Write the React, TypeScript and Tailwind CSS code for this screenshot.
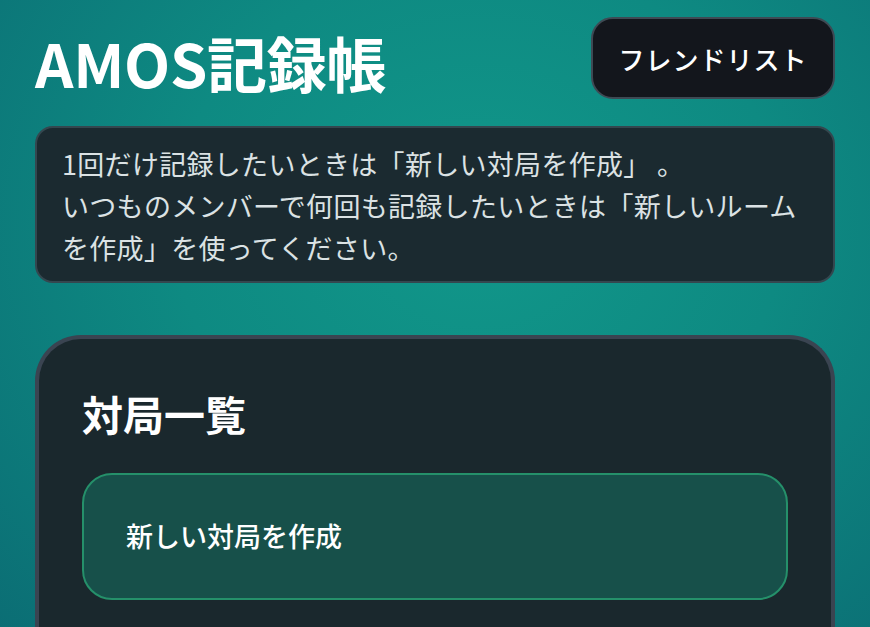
const jp = "font-['Noto_Sans_CJK_JP','Noto_Sans',sans-serif]";

export default function App() {
  return (
    <div
      className={`min-h-[627px] w-full overflow-hidden bg-[radial-gradient(ellipse_at_55%_35%,#11978a_0%,#0e8a82_45%,#0b6d74_100%)] px-[35px] pt-[17px] ${jp}`}
    >
      {/* header */}
      <div className="flex items-start justify-between">
        <h1 className="mt-[15px] text-[60px] font-semibold leading-[1] tracking-[-0.3px] text-white">
          AMOS記録帳
        </h1>
        <button className="h-[82px] w-[244px] rounded-[22px] border-2 border-[#3e4a54] bg-[#13161c] text-[26px] font-medium tracking-[1px] text-white">
          フレンドリスト
        </button>
      </div>

      {/* note */}
      <div className="mt-[27px] rounded-[18px] border-2 border-[#34474f] bg-[#1b2a30] px-[25px] pb-[12px] pt-[15px] text-[27px] leading-[42px] tracking-[0.3px] text-[#dbe2e4]">
        1回だけ記録したいときは「新しい対局を作成」 。
        <br />
        いつものメンバーで何回も記録したいときは「新しいルーム
        <br />
        を作成」を使ってください。
      </div>

      {/* games */}
      <div className="mt-[52px] rounded-t-[46px] border-4 border-b-0 border-[#3a4451] bg-[#1a282d] px-[43px] pb-[40px] pt-[46px]">
        <h2 className="text-[41px] font-bold leading-[56px] text-white">対局一覧</h2>
        <button className="mt-[32px] flex h-[127px] w-full items-center rounded-[30px] border-2 border-[#25906a] bg-[#17504a] px-[42px] text-[27px] font-medium text-white">
          新しい対局を作成
        </button>
      </div>
    </div>
  );
}
